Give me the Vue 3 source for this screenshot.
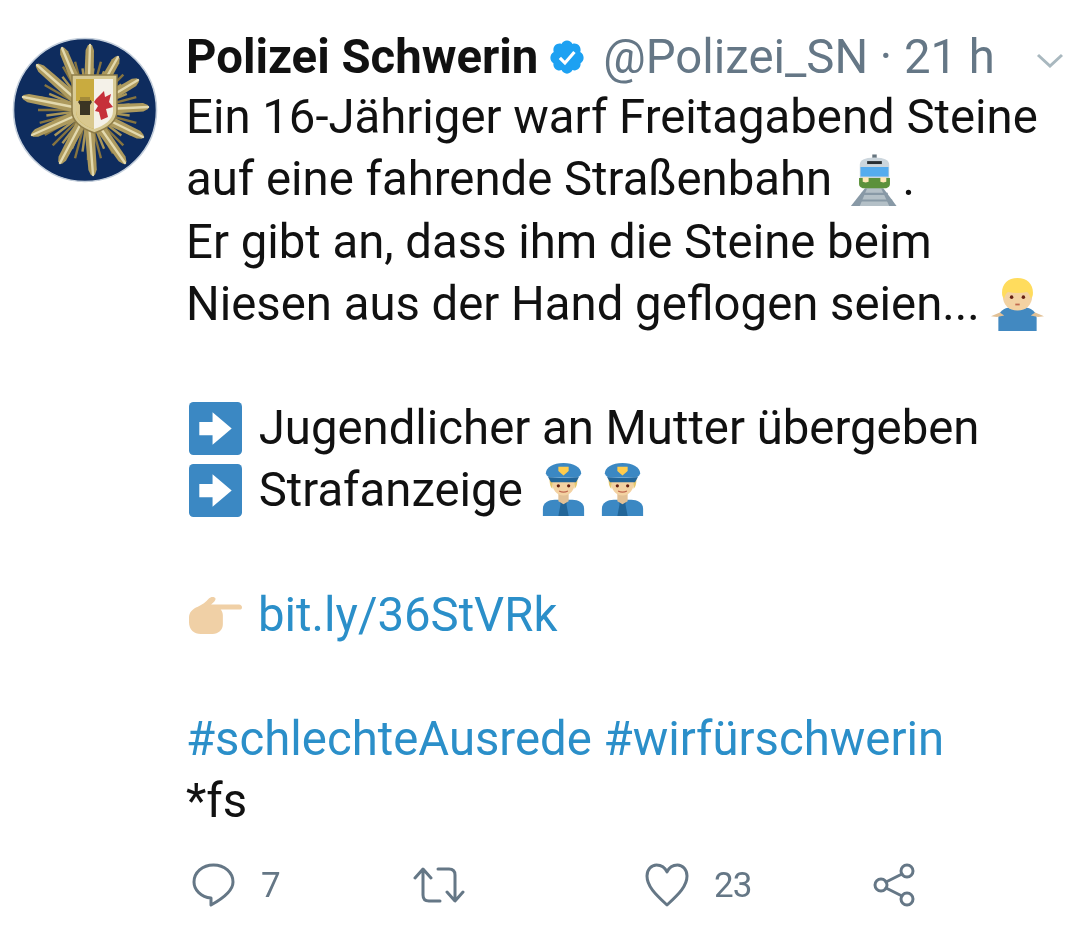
<template>
  <div class="tweet">
    <svg class="avatar" viewBox="0 0 146 146" aria-hidden="true">
      <circle cx="73" cy="73" r="71.500" fill="#0e2c5e" stroke="#c3cedb" stroke-width="1.600" />
      <line
        v-for="(r, i) in fineRays"
        :key="'f' + i"
        x1="76"
        y1="73"
        :x2="r.x"
        :y2="r.y"
        :stroke="i % 2 ? '#a89558' : '#86743f'"
        stroke-width="2.400"
      />
      <polygon v-for="(pts, i) in bigRays" :key="'b' + i" :points="pts" fill="#ad9a5e" />
      <line
        v-for="(t, i) in tips"
        :key="'h' + i"
        x1="76"
        y1="73"
        :x2="t[0]"
        :y2="t[1]"
        stroke="#e3d9ae"
        stroke-width="2.400"
        stroke-linecap="round"
      />
      <path d="M60 38h45v36c0 12-11 18-22.500 22C71 92 60 86 60 74z" fill="#d8ca94" stroke="#8f7d48" stroke-width="1.500" />
      <path d="M64 42h18v50c-10-3-18-9-18-18z" fill="#c9ab3f" />
      <path d="M64 64h18v28c-10-3-18-9-18-18z" fill="#d9c88e" />
      <path d="M82 42h19v32c0 9-9 15-19 18z" fill="#f4f1e8" />
      <path d="M84 62l8-8 1 6 6-3-2 8 4 5-7 2 2 8-7 3-2-8-4-1 3-5-4-4z" fill="#c6303a" />
      <path d="M66 65c4-5 11-5 14 0l-2 3v10h-10V68z" fill="#3b3524" />
      <path d="M68 60h10v4H68z" fill="#a38a3a" />
    </svg>

    <div class="content">
      <div class="header">
        <span class="name">Polizei Schwerin</span>
        <svg class="verified" viewBox="0 0 24 24" aria-hidden="true">
          <path d="M22.500 12.500c0-1.580-.875-2.950-2.148-3.600.154-.435.238-.905.238-1.400 0-2.210-1.710-3.998-3.818-3.998-.47 0-.92.084-1.336.25C14.818 2.415 13.510 1.500 12 1.500s-2.816.917-3.437 2.250c-.415-.165-.866-.25-1.336-.25-2.110 0-3.818 1.790-3.818 4 0 .494.083.964.237 1.400-1.272.65-2.147 2.018-2.147 3.600 0 1.495.782 2.798 1.942 3.486-.02.17-.032.34-.032.514 0 2.210 1.708 4 3.818 4 .47 0 .92-.086 1.335-.25.620 1.334 1.926 2.250 3.437 2.250 1.512 0 2.818-.916 3.437-2.250.415.163.865.248 1.336.248 2.110 0 3.818-1.790 3.818-4 0-.174-.012-.344-.033-.513 1.158-.687 1.943-1.990 1.943-3.484z" fill="#1da1f2" />
          <path d="M7.500 12.500l3.200 3.300 6-7" fill="none" stroke="#fff" stroke-width="2" />
        </svg>
        <span class="handle">@Polizei_SN · 21 h</span>
        <svg class="chevron" viewBox="0 0 28 16" aria-hidden="true">
          <path d="M2 3l12 11L26 3" fill="none" stroke="#a9b8bf" stroke-width="3" />
        </svg>
      </div>

      <div class="line">Ein 16-Jähriger warf Freitagabend Steine</div>
      <div class="line">
        auf eine fahrende Straßenbahn
        <svg class="emoji train" viewBox="0 0 36 36" aria-hidden="true">
          <path d="M11.500 24H24l9 12H2z" fill="#8899a6" />
          <path d="M13 24h9.500l5.500 12H8z" fill="#b4c0c7" />
          <path d="M6 33h24v-1.500H6zM9 28.500h18V27H9z" fill="#8899a6" />
          <path d="M16.500 1h3v3h-3z" fill="#66757f" />
          <path d="M8 8c0-3 3-5 10-5s10 2 10 5v12H8z" fill="#ccd6dd" />
          <path d="M13 5.500h10v2H13z" fill="#292f33" />
          <path d="M8.500 9.500h19V16h-19z" fill="#55acee" />
          <path d="M7.500 17h21v4c0 2-2 3-4 3h-13c-2 0-4-1-4-3z" fill="#5c913b" />
          <path d="M10 16.500h4v3l-2 .5-2-.5zM22 16.500h4v3l-2 .5-2-.5z" fill="#ffe8b6" />
        </svg>
        .
      </div>
      <div class="line">Er gibt an, dass ihm die Steine beim</div>
      <div class="line">
        Niesen aus der Hand geflogen seien...
        <svg class="emoji shrug" viewBox="0 0 36 36" aria-hidden="true">
          <path d="M5 36V27c0-4 4-7 8-7h10c4 0 8 3 8 7v9z" fill="#4289c1" />
          <path d="M0 26l6-2.500 3 2-5 1zM36 26l-6-2.500-3 2 5 1z" fill="#e2c196" />
          <path d="M8 12c0 6 4 10 10 10s10-4 10-10-4-9-10-9-10 3-10 9z" fill="#f3d2a2" />
          <path d="M18 0C11.500 0 7.500 4 7.500 10c0 2 .5 3 1.500 4 .5-2 1-3.500 2.500-4.500 4 1 9 1 13 0 1.500 1 2 2.500 2.500 4.500 1-1 1.500-2 1.500-4C28.500 4 24.500 0 18 0z" fill="#ffdc5d" />
          <circle cx="14" cy="13" r="1.200" fill="#662113" />
          <circle cx="22" cy="13" r="1.200" fill="#662113" />
          <path d="M16.500 18h3" stroke="#c1694f" stroke-width="1.200" />
        </svg>
      </div>
      <div class="line"></div>
      <div class="line">
        <svg class="emoji box" viewBox="0 0 36 36" aria-hidden="true">
          <rect width="36" height="36" rx="3" fill="#3b88c3" />
          <path d="M7 13.500h9V7l13 11-13 11v-6.500H7z" fill="#fff" />
        </svg>
        Jugendlicher an Mutter übergeben
      </div>
      <div class="line">
        <svg class="emoji box" viewBox="0 0 36 36" aria-hidden="true">
          <rect width="36" height="36" rx="3" fill="#3b88c3" />
          <path d="M7 13.500h9V7l13 11-13 11v-6.500H7z" fill="#fff" />
        </svg>
        Strafanzeige
        <svg v-for="n in 2" :key="n" class="emoji cop" viewBox="0 0 36 36" aria-hidden="true">
          <path d="M4 36v-5c0-4 4-6 8-6h12c4 0 8 2 8 6v5z" fill="#3b88c3" />
          <path d="M15 25h6l-1 3 1.500 8h-7l1.500-8z" fill="#226699" />
          <path d="M14.500 20h7v6l-3.500 2-3.500-2z" fill="#e2c196" />
          <path d="M10 12c0 6 3.500 10 8 10s8-4 8-10z" fill="#f3d2a2" />
          <path d="M8.500 10c0 4 .5 6 2 7.500V10zM27.500 10c0 4-.5 6-2 7.500V10z" fill="#e6c86e" />
          <path d="M6 7c0-4 5-7 12-7s12 3 12 7c-.5 2-2 3-4 3H10C8 10 6.500 9 6 7z" fill="#3b88c3" />
          <path d="M7.500 9.500c5 1 16 1 21 0l-2 3.500h-17z" fill="#226699" />
          <path d="M14.500 2.500h7v3L18 8.500l-3.500-3z" fill="#ffcc4d" />
          <circle cx="14.500" cy="15.500" r="1.100" fill="#662113" />
          <circle cx="21.500" cy="15.500" r="1.100" fill="#662113" />
          <path d="M15 19c2 1 4 1 6 0" fill="none" stroke="#c1694f" stroke-width="0.800" />
        </svg>
      </div>
      <div class="line"></div>
      <div class="line">
        <svg class="emoji box hand" viewBox="0 0 36 36" aria-hidden="true">
          <path d="M36 12.500c0 1-.8 1.500-1.800 1.500H21.500c1 1 1.500 2.500 1.500 4v6c0 4-3 6.500-7 6.500H8c-4.500 0-8-3-8-8v-3c0-4 2.500-6 6-7.500 3-1.200 5.500-3 7.500-5.500 1-1.300 4-1.500 4.500 0 .3 1-1 2.500-3 4H34c1.200 0 2 1 2 2z" fill="#f0d0a6" />
        </svg>
        <span class="link">bit.ly/36StVRk</span>
      </div>
      <div class="line"></div>
      <div class="line"><span class="link">#schlechteAusrede #wirfürschwerin</span></div>
      <div class="line">*fs</div>

      <div class="actions">
        <div class="action reply">
          <svg class="icon" viewBox="0 0 44 44" aria-hidden="true">
            <path d="M19 42v-7C9 34 2 27 2 19 2 9.500 10.500 2 21.500 2S41 9.500 41 19c0 9-11 17-22 23z" />
          </svg>
          <span>7</span>
        </div>
        <div class="action retweet">
          <svg class="icon wide" viewBox="0 0 52 36" aria-hidden="true">
            <path d="M2 11l8-9 8 9M10 3v25c0 4 2 6 6 6h11M50 25l-8 9-8-9M42 33V8c0-4-2-6-6-6H25" />
          </svg>
        </div>
        <div class="action like">
          <svg class="icon" viewBox="0 0 44 44" aria-hidden="true">
            <path d="M22 42C10 31 2 23 2 13 2 6.500 6.500 2 11.500 2 16 2 20 4.500 22 9c2-4.500 6-7 10.500-7C37.500 2 42 6.500 42 13c0 10-8 18-20 29z" />
          </svg>
          <span>23</span>
        </div>
        <div class="action share">
          <svg class="icon" viewBox="0 0 42 44" aria-hidden="true">
            <circle cx="8" cy="22" r="6" />
            <circle cx="34" cy="8" r="6" />
            <circle cx="34" cy="36" r="6" />
            <path d="M13 19l16-8M13 25l16 8" />
          </svg>
        </div>
      </div>
    </div>
  </div>
</template>

<script setup>
// star tips read off the badge, centre is a bit right of the circle's
const cx = 76
const cy = 73
const tips = [
  [50, 11], [78, 8], [106, 20], [126, 43], [136, 70], [131, 100],
  [113, 126], [81, 138], [48, 126], [20, 98], [11, 60], [25, 28],
]

const bigRays = tips.map(([x, y]) => {
  const len = Math.hypot(x - cx, y - cy)
  const nx = (y - cy) / len
  const ny = -(x - cx) / len
  const point = (t, w) => `${(cx + (x - cx) * t + nx * w).toFixed(1)},${(cy + (y - cy) * t + ny * w).toFixed(1)}`
  return [point(0.2, 5), point(0.92, 4.2), point(1, 2), point(1, -2), point(0.92, -4.2), point(0.2, -5)].join(' ')
})

const fineRays = Array.from({ length: 48 }, (_, i) => {
  const a = (i * 7.5 * Math.PI) / 180
  const r = i % 2 ? 42 : 50
  return { x: cx + r * Math.cos(a), y: cy + r * Math.sin(a) }
})
</script>

<style>
body {
  background: #fff;
}
</style>

<style scoped>
.tweet {
  display: flex;
  width: 1080px;
  height: 936px;
  padding: 24px 0 0 12px;
  box-sizing: border-box;
  font-family: Roboto, "Liberation Sans", sans-serif;
  font-size: 47.3px;
  color: #111;
  overflow: hidden;
  filter: blur(0.5px);
}

.avatar {
  flex: none;
  width: 146px;
  height: 146px;
  margin-top: 13px;
}

.content {
  margin-left: 28px;
  flex: 1;
}

.line,
.header {
  height: 62.2px;
  line-height: 62.2px;
  white-space: nowrap;
}

.header {
  display: flex;
  align-items: center;
  padding-top: 3px;
  box-sizing: border-box;
}

.name {
  font-weight: 700;
}

.verified {
  width: 38px;
  height: 38px;
  margin-left: 10px;
}

.handle {
  margin-left: 17px;
  color: #657786;
}

.chevron {
  width: 28px;
  height: 16px;
  margin-left: 41px;
  margin-top: 6px;
}

.emoji {
  width: 53px;
  height: 53px;
  vertical-align: -11px;
}

.train {
  margin-left: 4px;
  margin-right: -10px;
}

.box {
  margin-left: 3px;
  margin-right: 5px;
}

.hand {
  margin-right: 16px;
}

.cop {
  margin-left: 3px;
  margin-right: 3px;
  vertical-align: -10px;
}

.link {
  color: #2b8fc9;
}

.actions {
  display: flex;
  margin-top: 31px;
  padding-left: 6px;
  color: #657786;
  font-size: 35px;
  letter-spacing: -1px;
}

.action {
  display: flex;
  align-items: center;
  gap: 25px;
}

.reply {
  width: 221px;
}

.retweet {
  width: 232px;
}

.like {
  width: 227px;
}

.icon {
  width: 44px;
  height: 44px;
  fill: none;
  stroke: #657786;
  stroke-width: 3;
  stroke-linejoin: round;
  stroke-linecap: round;
}

.wide {
  width: 52px;
  height: 36px;
}
</style>
